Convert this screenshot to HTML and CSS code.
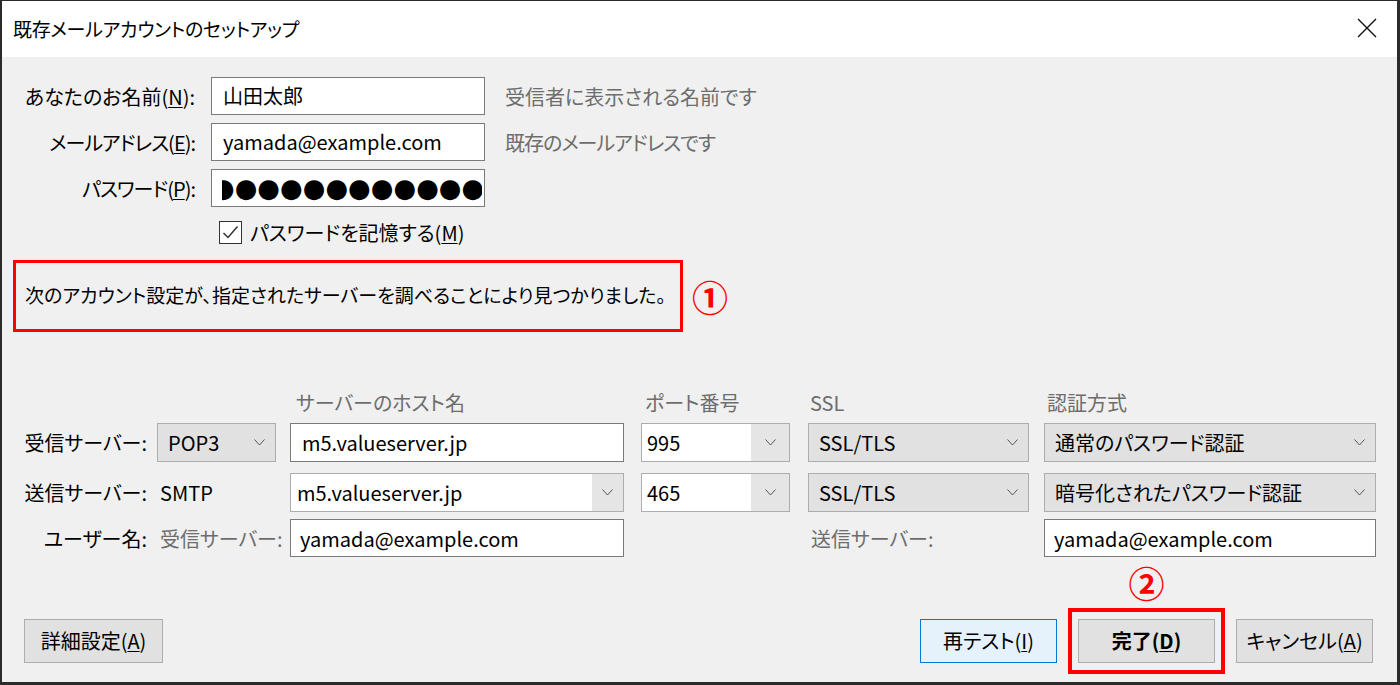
FILE: index.html
```html
<!DOCTYPE html>
<html lang="ja">
<head>
<meta charset="utf-8">
<title>既存メールアカウントのセットアップ</title>
<link rel="stylesheet" href="styles.css">
</head>
<body>
<div class="window">
  <div class="titlebar">
    <span class="title">既存メールアカウントのセットアップ</span>
    <svg class="close" width="20" height="20" viewBox="0 0 20 20"><path d="M1 1 L19 19 M19 1 L1 19" stroke="#111" stroke-width="1.4" fill="none"/></svg>
  </div>
  <div class="content">
    <div class="identity">
      <span class="lbl">あなたのお名前(<u>N</u>):</span>
      <div class="field">山田太郎</div>
      <span class="hint">受信者に表示される名前です</span>

      <span class="lbl kata">メールアドレス(<u>E</u>):</span>
      <div class="field">yamada@example.com</div>
      <span class="hint kata">既存のメールアドレスです</span>

      <span class="lbl kata">パスワード(<u>P</u>):</span>
      <div class="field pw"><span class="dots-clip"><span class="dots">●●●●●●●●●●●●●</span></span></div>
      <span></span>

      <span></span>
      <div class="remember">
        <span class="checkbox"><svg width="21" height="21" viewBox="0 0 21 21"><path d="M3.5 11 L8 15.5 L17.5 4.5" stroke="#333" stroke-width="1.5" fill="none"/></svg></span>
        <span>パスワードを記憶する(<u>M</u>)</span>
      </div>
    </div>

    <div class="found-row">
      <div class="found">次のアカウント設定が、指定されたサーバーを調べることにより見つかりました。</div>
      <span class="mark">①</span>
    </div>

    <div class="servers">
      <div class="srow head">
        <span></span>
        <span></span>
        <span class="colhead">サーバーのホスト名</span>
        <span class="colhead">ポート番号</span>
        <span class="colhead">SSL</span>
        <span class="colhead">認証方式</span>
      </div>
      <div class="srow r1">
        <span class="slbl">受信サーバー:</span>
        <div class="select w-proto"><span>POP3</span><svg class="chev" width="11" height="7" viewBox="0 0 11 7"><path d="M0.5 0.5 L5.5 6 L10.5 0.5" stroke="#555" fill="none"/></svg></div>
        <div class="input w-host">m5.valueserver.jp</div>
        <div class="combo w-port"><span class="ctext">995</span><span class="cbtn"><svg class="chev" width="11" height="7" viewBox="0 0 11 7"><path d="M0.5 0.5 L5.5 6 L10.5 0.5" stroke="#555" fill="none"/></svg></span></div>
        <div class="select w-ssl"><span>SSL/TLS</span><svg class="chev" width="11" height="7" viewBox="0 0 11 7"><path d="M0.5 0.5 L5.5 6 L10.5 0.5" stroke="#555" fill="none"/></svg></div>
        <div class="select w-auth"><span>通常のパスワード認証</span><svg class="chev" width="11" height="7" viewBox="0 0 11 7"><path d="M0.5 0.5 L5.5 6 L10.5 0.5" stroke="#555" fill="none"/></svg></div>
      </div>
      <div class="srow r2">
        <span class="slbl">送信サーバー:</span>
        <span class="plain">SMTP</span>
        <div class="combo w-host"><span class="ctext host2">m5.valueserver.jp</span><span class="cbtn small"><svg class="chev" width="11" height="7" viewBox="0 0 11 7"><path d="M0.5 0.5 L5.5 6 L10.5 0.5" stroke="#555" fill="none"/></svg></span></div>
        <div class="combo w-port"><span class="ctext">465</span><span class="cbtn"><svg class="chev" width="11" height="7" viewBox="0 0 11 7"><path d="M0.5 0.5 L5.5 6 L10.5 0.5" stroke="#555" fill="none"/></svg></span></div>
        <div class="select w-ssl"><span>SSL/TLS</span><svg class="chev" width="11" height="7" viewBox="0 0 11 7"><path d="M0.5 0.5 L5.5 6 L10.5 0.5" stroke="#555" fill="none"/></svg></div>
        <div class="select w-auth"><span>暗号化されたパスワード認証</span><svg class="chev" width="11" height="7" viewBox="0 0 11 7"><path d="M0.5 0.5 L5.5 6 L10.5 0.5" stroke="#555" fill="none"/></svg></div>
      </div>
      <div class="srow r3">
        <span class="slbl">ユーザー名:</span>
        <span class="plain gray">受信サーバー:</span>
        <div class="input w-host user">yamada@example.com</div>
        <span></span>
        <span class="plain gray">送信サーバー:</span>
        <div class="input w-auth user">yamada@example.com</div>
      </div>
    </div>

    <div class="buttons">
      <button class="btn adv">詳細設定(<u>A</u>)</button>
      <span class="spacer"></span>
      <button class="btn retest">再テスト(<u>I</u>)</button>
      <div class="highlight">
        <span class="mark mark2">②</span>
        <button class="btn done">完了(<u>D</u>)</button>
      </div>
      <button class="btn cancel">キャンセル(<u>A</u>)</button>
    </div>
  </div>
</div>
</body>
</html>
```

FILE: styles.css
```css
* { box-sizing: border-box; }

html, body {
  margin: 0;
  padding: 0;
  background: #2b2b2b;
}

body {
  font-family: "Noto Sans CJK JP", "Noto Sans", sans-serif;
  font-feature-settings: "palt";
  color: #000;
}

.window {
  width: 1400px;
  height: 685px;
  border-top: 1px solid #2b2b2b;
  border-left: 2px solid #2b2b2b;
  border-right: 3px solid #2b2b2b;
  border-bottom: 3px solid #2b2b2b;
  background: #f0f0f0;
  display: flex;
  flex-direction: column;
  overflow: hidden;
}

.titlebar {
  height: 56px;
  background: #fff;
  display: flex;
  align-items: center;
  justify-content: space-between;
  padding: 0 20px 0 11px;
  flex-shrink: 0;
}

.title {
  font-size: 19px;
  letter-spacing: -0.3px;
  padding-bottom: 2px;
}

.close {
  display: block;
  margin-bottom: 2px;
}

.content {
  flex: 1;
  display: flex;
  flex-direction: column;
}

u {
  text-decoration: underline;
  text-underline-offset: 2px;
  text-decoration-thickness: 1px;
}

/* identity form */
.identity {
  margin-top: 20px;
  display: grid;
  grid-template-columns: 193px 274px auto;
  grid-template-rows: 38px 38px 38px 29px;
  column-gap: 16px;
  row-gap: 8px;
  align-items: center;
}

.lbl {
  text-align: right;
  font-size: 20px;
  white-space: nowrap;
}

.kata { letter-spacing: -1px; }

.field {
  height: 38px;
  background: #fff;
  border: 1px solid #7a7a7a;
  font-size: 20px;
  line-height: 36px;
  padding-left: 11px;
  white-space: nowrap;
  overflow: hidden;
}

.field.pw {
  padding: 0 2px 0 10px;
  display: flex;
  align-items: center;
}

.dots-clip {
  display: block;
  overflow: hidden;
  width: 100%;
  height: 36px;
  line-height: 36px;
}

.dots {
  display: inline-block;
  margin-left: -10px;
  font-family: "DejaVu Sans", sans-serif;
  font-size: 26px;
  letter-spacing: 0;
  white-space: nowrap;
}

.hint {
  font-size: 20px;
  color: #6d6d6d;
  margin-left: 4px;
  white-space: nowrap;
}

.remember {
  grid-column: 2 / span 2;
  align-self: end;
  display: flex;
  align-items: center;
  gap: 8px;
  padding-left: 8px;
  height: 24px;
  font-size: 20px;
  white-space: nowrap;
}

.checkbox {
  width: 23px;
  height: 23px;
  border: 1px solid #333;
  background: #fff;
  display: flex;
  align-items: center;
  justify-content: center;
}

.checkbox svg { display: block; }

/* found message */
.found-row {
  margin-top: 16px;
  margin-left: 11px;
  display: flex;
  align-items: center;
  gap: 9px;
}

.found {
  width: 670px;
  height: 72px;
  border: 3px solid #ff0000;
  padding-left: 9px;
  padding-bottom: 3px;
  display: flex;
  align-items: center;
  font-size: 19px;
  white-space: nowrap;
}

.mark {
  color: #ff0000;
  font-size: 36px;
  font-weight: bold;
  line-height: 1;
  font-family: "Noto Sans CJK JP", sans-serif;
}

/* servers table */
.servers {
  margin-top: 56px;
  display: flex;
  flex-direction: column;
}

.srow {
  display: grid;
  grid-template-columns: 155px 133px 351px 167px 236px 332px;
  align-items: center;
  font-size: 20px;
}

.srow.head { height: 24px; }
.srow.r1 { height: 39px; margin-top: 11px; }
.srow.r2 { height: 39px; margin-top: 11px; }
.srow.r3 { height: 38px; margin-top: 7px; }

.colhead {
  color: #6d6d6d;
  padding-left: 6px;
  white-space: nowrap;
}
.srow.head .colhead:nth-child(4) { padding-left: 4px; }
.srow.head .colhead:nth-child(5) { padding-left: 2px; }
.srow.head .colhead:nth-child(6) { padding-left: 3px; }

.slbl {
  text-align: right;
  padding-right: 10px;
  white-space: nowrap;
}

.plain {
  padding-left: 3px;
  white-space: nowrap;
}

.gray { color: #6d6d6d; }

.w-proto { width: 119px; }
.w-host { width: 334px; }
.w-port { width: 149px; }
.w-ssl { width: 221px; }
.w-auth { width: 332px; }

.select {
  height: 39px;
  background: #e1e1e1;
  border: 1px solid #adadad;
  display: flex;
  align-items: center;
  justify-content: space-between;
  padding: 0 10px 0 10px;
  white-space: nowrap;
}

.chev { display: block; }

.input {
  height: 39px;
  background: #fff;
  border: 1px solid #7a7a7a;
  display: flex;
  align-items: center;
  padding-left: 11px;
  white-space: nowrap;
}

.input.user { height: 38px; padding-left: 9px; }

.combo {
  height: 39px;
  background: #fff;
  border: 1px solid #adadad;
  display: flex;
  align-items: stretch;
}

.ctext {
  flex: 1;
  display: flex;
  align-items: center;
  padding-left: 5px;
  white-space: nowrap;
}

.ctext.host2 { padding-left: 6px; }

.cbtn {
  width: 38px;
  background: #e5e5e5;
  display: flex;
  align-items: center;
  justify-content: center;
}

.cbtn.small { width: 31px; }

/* buttons */
.buttons {
  margin-top: 51px;
  display: flex;
  align-items: center;
  padding: 0 24px 0 22px;
}

.spacer { flex: 1; }

.btn {
  font-family: "Noto Sans CJK JP", "Noto Sans", sans-serif;
  font-feature-settings: "palt";
  font-size: 20px;
  height: 44px;
  width: 137px;
  background: #e1e1e1;
  border: 1px solid #adadad;
  color: #000;
  padding: 0 0 2px 0;
  margin: 0;
}

.btn.adv { width: 139px; }

.btn.retest {
  background: #e5f1fb;
  border: 1px solid #0078d7;
}

.btn.done { font-weight: bold; }

.highlight {
  position: relative;
  border: 4px solid #ff0000;
  padding: 7px 6px;
  margin: 0 11px;
}

.mark2 {
  position: absolute;
  left: 50%;
  bottom: calc(100% + 12px);
  transform: translateX(-50%);
}
```
